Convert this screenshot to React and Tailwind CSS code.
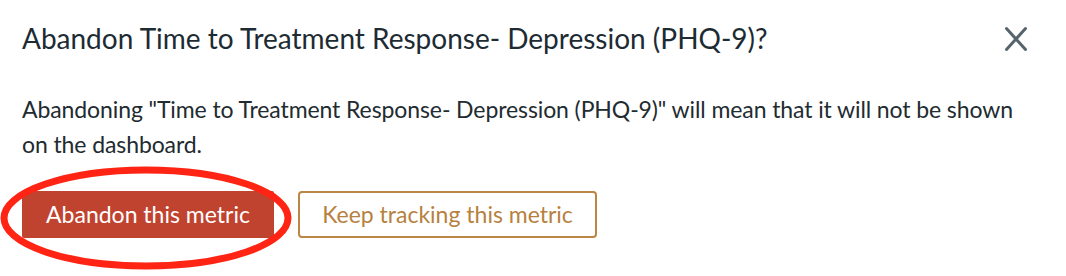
import React from 'react';

function CloseIcon() {
  return (
    <svg width="24" height="26" viewBox="0 0 24 26" fill="none" stroke="#56646c" strokeWidth="3" strokeLinecap="round">
      <path d="M2.5 2.5L21.5 23.5M21.5 2.5L2.5 23.5" />
    </svg>
  );
}

export default function App() {
  return (
    <div className="relative w-[1066px] h-[276px] bg-white overflow-hidden font-['Lato',sans-serif]">
      {/* Header */}
      <div className="flex items-start justify-between pl-[22px] pr-[38px] pt-[21px]">
        <h2 className="text-[28px] leading-[34px] text-[#1d2b33] font-normal">
          Abandon Time to Treatment Response- Depression (PHQ-9)?
        </h2>
        <button className="mt-[5px] text-[#5b6870]" aria-label="Close">
          <CloseIcon />
        </button>
      </div>

      {/* Body */}
      <p className="pl-[22px] pr-[40px] mt-[37px] text-[23px] leading-[35px] text-[#222b30] tracking-[-0.1px]">
        Abandoning "Time to Treatment Response- Depression (PHQ-9)" will mean that it will not be shown on the dashboard.
      </p>

      {/* Actions */}
      <div className="flex gap-[24px] pl-[22px] mt-[29px]">
        <button className="h-[47px] w-[252px] bg-[#c0432f] text-white text-[23px] rounded-[2px]">
          Abandon this metric
        </button>
        <button className="h-[47px] w-[299px] border-2 border-[#bb8646] text-[#b7813f] text-[23px] rounded-[4px] bg-white">
          Keep tracking this metric
        </button>
      </div>

      {/* annotation ellipse */}
      <svg className="absolute left-0 top-[165px] pointer-events-none" width="296" height="108" viewBox="0 0 296 108">
        <ellipse cx="146" cy="53" rx="142" ry="48" fill="none" stroke="#ff2414" strokeWidth="7" />
      </svg>
    </div>
  );
}
